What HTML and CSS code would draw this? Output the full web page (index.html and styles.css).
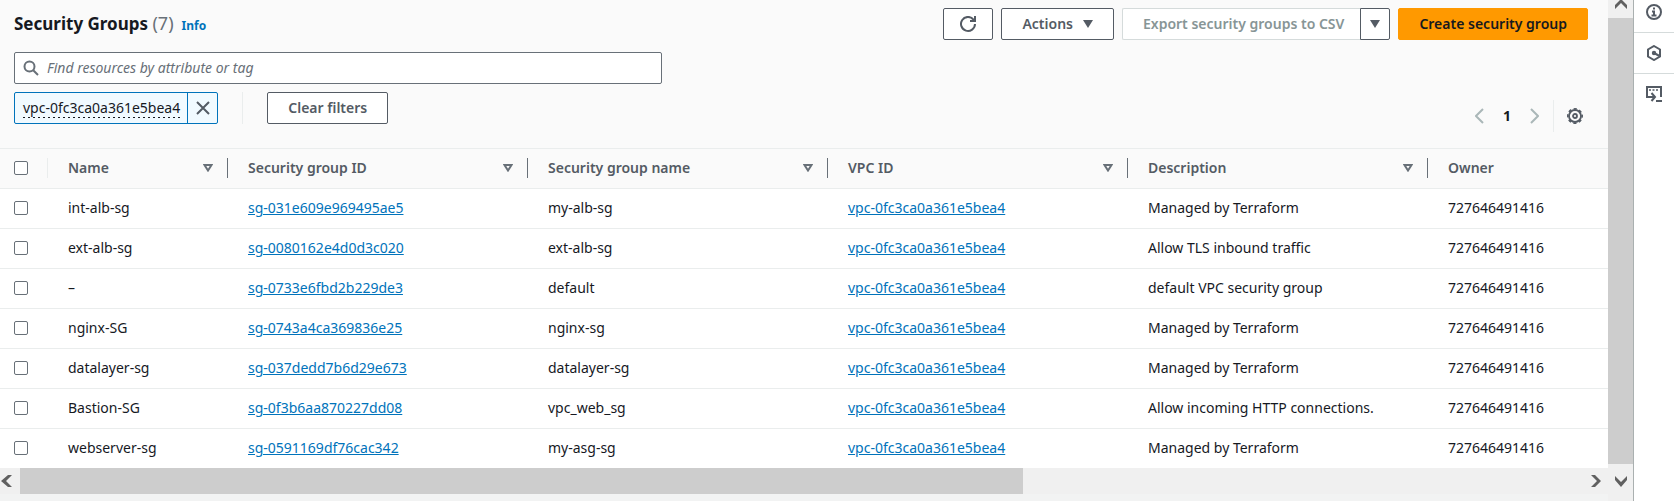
FILE: index.html
```html
<!DOCTYPE html>
<html lang="en">
<head>
<meta charset="utf-8">
<title>Security Groups</title>
<link rel="stylesheet" href="styles.css">
</head>
<body>
<div class="app">
  <div class="page">
    <main class="panel">
      <header class="panel-header">
        <div class="title-row">
          <div class="heading">
            <h1>Security Groups <span class="counter">(7)</span></h1>
            <a class="info" href="#">Info</a>
          </div>
          <div class="actions">
            <button class="btn btn-icon" type="button" aria-label="Refresh">
              <svg width="16" height="16" viewBox="0 0 16 16" fill="none" stroke="currentColor" stroke-width="2"><path d="M10 5h5V0"/><path d="M15 8a7 7 0 1 1-1.500-4.400L15 5"/></svg>
            </button>
            <button class="btn btn-menu" type="button">Actions
              <svg width="10" height="8" viewBox="0 0 10 8" fill="currentColor"><path d="M0 0h10L5 8z"/></svg>
            </button>
            <div class="split">
              <button class="btn btn-disabled" type="button" disabled>Export security groups to CSV</button>
              <button class="btn btn-caret" type="button" aria-label="More export options">
                <svg width="10" height="8" viewBox="0 0 10 8" fill="currentColor"><path d="M0 0h10L5 8z"/></svg>
              </button>
            </div>
            <button class="btn btn-primary" type="button">Create security group</button>
          </div>
        </div>
        <label class="search">
          <svg width="16" height="16" viewBox="0 0 16 16" fill="none" stroke="currentColor" stroke-width="2"><circle cx="6.500" cy="6.500" r="5"/><path d="M10.200 10.200 15 15"/></svg>
          <input type="text" placeholder="Find resources by attribute or tag" aria-label="Find resources by attribute or tag">
        </label>
        <div class="filter-row">
          <div class="filters">
            <div class="token">
              <button class="token-label" type="button"><span>vpc-0fc3ca0a361e5bea4</span></button>
              <button class="token-remove" type="button" aria-label="Remove filter">
                <svg width="14" height="14" viewBox="0 0 14 14" fill="none" stroke="currentColor" stroke-width="2"><path d="M1 1l12 12M13 1L1 13"/></svg>
              </button>
            </div>
            <span class="rule"></span>
            <button class="btn btn-clear" type="button">Clear filters</button>
          </div>
          <div class="paging">
            <button class="page-arrow" type="button" aria-label="Previous page" disabled><svg width="9" height="16" viewBox="0 0 9 16" fill="none" stroke="currentColor" stroke-width="2"><path d="M8 1L1 8l7 7"/></svg></button>
            <button class="page-number" type="button">1</button>
            <button class="page-arrow" type="button" aria-label="Next page" disabled><svg width="9" height="16" viewBox="0 0 9 16" fill="none" stroke="currentColor" stroke-width="2"><path d="M1 1l7 7-7 7"/></svg></button>
            <button class="settings" type="button" aria-label="Preferences">
              <svg width="16" height="16" viewBox="0 0 16 16" fill="none" stroke="currentColor"><circle cx="8" cy="8" r="6" stroke-width="1.800"/><circle cx="8" cy="8" r="7.200" stroke-width="1.600" stroke-dasharray="3.200 2.455" stroke-dashoffset="1.600"/><circle cx="8" cy="8" r="2" stroke-width="1.800"/></svg>
            </button>
          </div>
        </div>
      </header>

      <table class="grid">
        <colgroup><col class="col-check"><col class="col-name"><col class="col-wide"><col class="col-wide"><col class="col-wide"><col class="col-wide"><col></colgroup>
        <thead>
          <tr>
            <th class="check"><input type="checkbox" aria-label="Select all"></th>
            <th><div class="th"><span>Name</span><button class="sort" type="button" aria-label="Sort by name"><svg width="10" height="8" viewBox="0 0 10 8" fill="none" stroke="currentColor" stroke-width="2"><path d="M1.500 1h7L5 6.500z"/></svg></button></div></th>
            <th><div class="th"><span>Security group ID</span><button class="sort" type="button" aria-label="Sort by security group ID"><svg width="10" height="8" viewBox="0 0 10 8" fill="none" stroke="currentColor" stroke-width="2"><path d="M1.500 1h7L5 6.500z"/></svg></button></div></th>
            <th><div class="th"><span>Security group name</span><button class="sort" type="button" aria-label="Sort by security group name"><svg width="10" height="8" viewBox="0 0 10 8" fill="none" stroke="currentColor" stroke-width="2"><path d="M1.500 1h7L5 6.500z"/></svg></button></div></th>
            <th><div class="th"><span>VPC ID</span><button class="sort" type="button" aria-label="Sort by VPC ID"><svg width="10" height="8" viewBox="0 0 10 8" fill="none" stroke="currentColor" stroke-width="2"><path d="M1.500 1h7L5 6.500z"/></svg></button></div></th>
            <th><div class="th"><span>Description</span><button class="sort" type="button" aria-label="Sort by description"><svg width="10" height="8" viewBox="0 0 10 8" fill="none" stroke="currentColor" stroke-width="2"><path d="M1.500 1h7L5 6.500z"/></svg></button></div></th>
            <th class="last"><div class="th"><span>Owner</span></div></th>
          </tr>
        </thead>
        <tbody>
          <tr><td class="check"><input type="checkbox" aria-label="Select int-alb-sg"></td><td>int-alb-sg</td><td><a href="#">sg-031e609e969495ae5</a></td><td>my-alb-sg</td><td><a href="#">vpc-0fc3ca0a361e5bea4</a></td><td>Managed by Terraform</td><td>727646491416</td></tr>
          <tr><td class="check"><input type="checkbox" aria-label="Select ext-alb-sg"></td><td>ext-alb-sg</td><td><a href="#">sg-0080162e4d0d3c020</a></td><td>ext-alb-sg</td><td><a href="#">vpc-0fc3ca0a361e5bea4</a></td><td>Allow TLS inbound traffic</td><td>727646491416</td></tr>
          <tr><td class="check"><input type="checkbox" aria-label="Select default"></td><td>–</td><td><a href="#">sg-0733e6fbd2b229de3</a></td><td>default</td><td><a href="#">vpc-0fc3ca0a361e5bea4</a></td><td>default VPC security group</td><td>727646491416</td></tr>
          <tr><td class="check"><input type="checkbox" aria-label="Select nginx-SG"></td><td>nginx-SG</td><td><a href="#">sg-0743a4ca369836e25</a></td><td>nginx-sg</td><td><a href="#">vpc-0fc3ca0a361e5bea4</a></td><td>Managed by Terraform</td><td>727646491416</td></tr>
          <tr><td class="check"><input type="checkbox" aria-label="Select datalayer-sg"></td><td>datalayer-sg</td><td><a href="#">sg-037dedd7b6d29e673</a></td><td>datalayer-sg</td><td><a href="#">vpc-0fc3ca0a361e5bea4</a></td><td>Managed by Terraform</td><td>727646491416</td></tr>
          <tr><td class="check"><input type="checkbox" aria-label="Select Bastion-SG"></td><td>Bastion-SG</td><td><a href="#">sg-0f3b6aa870227dd08</a></td><td>vpc_web_sg</td><td><a href="#">vpc-0fc3ca0a361e5bea4</a></td><td>Allow incoming HTTP connections.</td><td>727646491416</td></tr>
          <tr><td class="check"><input type="checkbox" aria-label="Select webserver-sg"></td><td>webserver-sg</td><td><a href="#">sg-0591169df76cac342</a></td><td>my-asg-sg</td><td><a href="#">vpc-0fc3ca0a361e5bea4</a></td><td>Managed by Terraform</td><td>727646491416</td></tr>
        </tbody>
      </table>
    </main>
    <div class="hscroll">
      <svg width="20" height="26" viewBox="0 0 20 26" fill="#606060"><path d="M8 7h4L6 13l6 6H8L1 13z"/></svg>
      <div class="hthumb"></div>
      <div class="htrack"></div>
      <svg width="20" height="26" viewBox="0 0 20 26" fill="#606060"><path d="M3 7h4l6 6-6 6H3l6-6z"/></svg>
    </div>
  </div>
  <div class="vscroll">
    <svg width="25" height="18" viewBox="0 0 25 18" fill="#606060"><path d="M13-1l6 6v4l-6-6-6 6V5z"/></svg>
    <div class="vthumb"></div>
    <svg width="25" height="37" viewBox="0 0 25 37" fill="#606060"><path d="M7 12l6 6 6-6v4l-6 7-6-7z"/></svg>
  </div>
  <aside class="rail">
    <button type="button" aria-label="Info panel"><svg width="16" height="16" viewBox="0 0 16 16" fill="none" stroke="currentColor" stroke-width="2"><circle cx="8" cy="8" r="7"/><path d="M8 3.500v2M6 7.500h2v4M5.500 11.500h5"/></svg></button>
    <button type="button" aria-label="Diagnostics panel"><svg width="16" height="16" viewBox="0 0 16 16" fill="none" stroke="currentColor" stroke-width="2"><path d="M8 1l6 3.500v7L8 15l-6-3.500v-7z"/><path d="M8 8l5.500 3"/><circle cx="8" cy="8" r="1.200" fill="currentColor"/></svg></button>
    <button type="button" aria-label="CloudShell"><svg width="16" height="16" viewBox="0 0 16 16" fill="none" stroke="currentColor" stroke-width="2"><path d="M15 11V1H1v10h7M5.500 7l3.500 4-3.500 4M10 15h6"/><path d="M3 4h2M6.500 4h2M10 4h2" stroke-width="1.500"/></svg></button>
  </aside>
</div>
</body>
</html>
```
FILE: styles.css
```css
* { box-sizing: border-box; }

body {
  margin: 0;
  background: #f2f3f3;
  color: #16191f;
  font-family: "Noto Sans", "Open Sans", sans-serif;
  font-size: 14px;
  line-height: 22px;
}

button, input { font: inherit; color: inherit; margin: 0; }
button { padding: 0; border: 0; background: none; }
svg { display: block; flex: none; }
a { color: #0073bb; }

.app { display: flex; min-height: 100vh; }
.page { flex: 1; min-width: 0; }
.panel { background: #fff; }

.panel-header {
  padding: 8px 20px 16px 14px;
  background: #fafafa;
  border-bottom: 1px solid #eaeded;
}

.title-row { display: flex; justify-content: space-between; }
.heading { display: flex; align-items: baseline; gap: 8px; padding-top: 4px; }
h1 { margin: 0; font-size: 17px; font-weight: 700; line-height: 22px; }
.counter { color: #687078; font-size: 18px; font-weight: 400; }
.info { font-size: 12px; font-weight: 700; text-decoration: none; }

.actions { display: flex; gap: 8px; }
.btn {
  display: flex;
  align-items: center;
  justify-content: center;
  height: 32px;
  padding: 0 20px;
  border: 1px solid #545b64;
  border-radius: 2px;
  background: #fff;
  color: #545b64;
  font-weight: 600;
  white-space: nowrap;
}
.btn-icon { width: 50px; padding: 0; }
.btn-menu { gap: 10px; padding: 0 20px; }
.split { display: flex; }
.btn-disabled {
  padding: 0 16px 0 20px;
  border-color: #d5dbdb;
  border-right: 0;
  border-radius: 2px 0 0 2px;
  color: #879596;
}
.btn-caret { width: 30px; padding: 0; border-radius: 0 2px 2px 0; }
.btn-primary { border-color: #ff9900; background: #ff9900; color: #16191f; }

.search {
  display: flex;
  align-items: center;
  gap: 8px;
  max-width: 648px;
  height: 32px;
  margin-top: 12px;
  padding: 0 8px;
  border: 1px solid #687078;
  border-radius: 2px;
  background: #fff;
  color: #687078;
}
.search input { flex: 1; padding: 0; border: 0; outline: 0; background: none; }
.search input::placeholder { color: #687078; font-style: italic; opacity: 1; }

.filter-row { display: flex; justify-content: space-between; margin-top: 8px; }
.filters { display: flex; height: 32px; }
.token {
  display: flex;
  border: 1px solid #0073bb;
  border-radius: 2px;
  background: #f1faff;
}
.token-label { padding: 0 7px 0 8px; }
.token-label span {
  padding-bottom: 1px;
  background: repeating-linear-gradient(90deg, #16191f 0 2px, transparent 2px 5px) left bottom / 100% 1px no-repeat;
}
.token-remove {
  display: flex;
  align-items: center;
  justify-content: center;
  width: 30px;
  border-left: 1px solid #0073bb;
  color: #545b64;
}
.rule { width: 1px; height: 32px; margin: 0 24px; background: #eaeded; }

.paging { display: flex; align-items: center; margin-top: 8px; }
.page-arrow { padding: 0 6px; color: #aab7b8; }
.page-number { width: 34px; font-weight: 700; }
.settings {
  display: flex;
  align-items: center;
  height: 32px;
  margin-left: 8px;
  padding: 0 5px 0 13px;
  border-left: 1px solid #eaeded;
  color: #545b64;
}

.grid { width: 100%; border-collapse: collapse; table-layout: fixed; }
.col-check { width: 48px; }
.col-name { width: 180px; }
.col-wide { width: 300px; }

th, td { padding: 0 0 0 20px; text-align: left; white-space: nowrap; }
th {
  height: 39px;
  background: #fafafa;
  border-bottom: 1px solid #eaeded;
  color: #545b64;
  font-weight: 600;
}
td { height: 40px; border-bottom: 1px solid #eaeded; }
tbody tr:last-child td { border-bottom: 0; }
.th {
  display: flex;
  align-items: center;
  justify-content: space-between;
  height: 20px;
  padding-right: 14px;
  border-right: 1px solid #687078;
}
.last .th { border-right: 0; }
.sort { color: #687078; }

.check { padding: 0 0 0 14px; }
th.check {
  background: linear-gradient(#eaeded, #eaeded) right center / 1px 20px no-repeat #fafafa;
}
.check input {
  display: block;
  appearance: none;
  width: 14px;
  height: 14px;
  border: 1px solid #687078;
  border-radius: 2px;
  background: #fff;
}

.hscroll { display: flex; height: 26px; background: #f0f0f0; }
.hthumb { flex: 1003; background: #cdcdcd; }
.htrack { flex: 565; }

.vscroll { display: flex; flex-direction: column; width: 25px; background: #f0f0f0; }
.vthumb { flex: 1; background: #cdcdcd; }

.rail { width: 41px; border-left: 1px solid #aab0b0; background: #fff; }
.rail button {
  display: flex;
  align-items: center;
  justify-content: center;
  width: 100%;
  height: 41px;
  border-bottom: 1px solid #d5dbdb;
  color: #545b64;
}
.rail button:first-child { align-items: flex-start; height: 33px; padding-top: 4px; }
.rail button:last-child { border-bottom-color: transparent; }
```
